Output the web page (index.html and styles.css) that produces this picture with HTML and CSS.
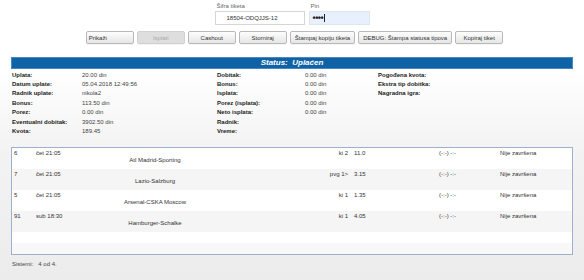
FILE: index.html
```html
<!DOCTYPE html>
<html lang="sr">
<head>
  <meta charset="UTF-8">
  <title>Tiket</title>
  <link rel="stylesheet" href="styles.css">
</head>
<body>
  <div class="page">
    <div class="search">
      <div class="field">
        <label>Šifra tiketa</label>
        <div class="input code">18504-ODQJJS-12</div>
      </div>
      <div class="field">
        <label>Pin</label>
        <div class="input pin"><span class="dots">••••</span><span class="caret"></span></div>
      </div>
    </div>

    <div class="actions">
      <button class="btn left">Prikaži</button>
      <button class="btn" disabled>Isplati</button>
      <button class="btn">Cashout</button>
      <button class="btn">Storniraj</button>
      <button class="btn">Štampaj kopiju tiketa</button>
      <button class="btn">DEBUG: Štampa statusa tipova</button>
      <button class="btn">Kopiraj tiket</button>
    </div>

    <div class="status-bar">Status:&nbsp; Uplaćen</div>

    <div class="info">
      <div class="info-col col-a">
        <b>Uplata:</b><span>20.00 din</span>
        <b>Datum uplate:</b><span>05.04.2018 12:49:56</span>
        <b>Radnik uplate:</b><span>nikola2</span>
        <b>Bonus:</b><span>113.50 din</span>
        <b>Porez:</b><span>0.00 din</span>
        <b>Eventualni dobitak:</b><span>3902.50 din</span>
        <b>Kvota:</b><span>189.45</span>
      </div>
      <div class="info-col col-b">
        <b>Dobitak:</b><span>0.00 din</span>
        <b>Bonus:</b><span>0.00 din</span>
        <b>Isplata:</b><span>0.00 din</span>
        <b>Porez (isplata):</b><span>0.00 din</span>
        <b>Neto isplata:</b><span>0.00 din</span>
        <b>Radnik:</b><span></span>
        <b>Vreme:</b><span></span>
      </div>
      <div class="info-col col-c">
        <b>Pogođena kvota:</b>
        <b>Ekstra tip dobitka:</b>
        <b>Nagradna igra:</b>
      </div>
    </div>

    <div class="pairs">
      <div class="pair">
        <span>6</span><span>čet 21:05</span><span class="match">Atl Madrid-Sporting</span>
        <span class="tip">ki 2</span><span class="odd">11.0</span><span>(-:-) -:-</span><span>Nije završena</span>
      </div>
      <div class="pair">
        <span>7</span><span>čet 21:05</span><span class="match">Lazio-Salzburg</span>
        <span class="tip">pvg 1&gt;</span><span class="odd">3.15</span><span>(-:-) -:-</span><span>Nije završena</span>
      </div>
      <div class="pair">
        <span>5</span><span>čet 21:05</span><span class="match">Arsenal-CSKA Moscow</span>
        <span class="tip">ki 1</span><span class="odd">1.35</span><span>(-:-) -:-</span><span>Nije završena</span>
      </div>
      <div class="pair">
        <span>91</span><span>sub 18:30</span><span class="match">Hamburger-Schalke</span>
        <span class="tip">ki 1</span><span class="odd">4.05</span><span>(-:-) -:-</span><span>Nije završena</span>
      </div>
      <div class="pair empty"></div>
      <div class="pair empty"></div>
    </div>

    <div class="systems"><span>Sistemi:</span><span>4 od 4.</span></div>
  </div>
</body>
</html>
```

FILE: styles.css
```css
* {
  margin: 0;
  padding: 0;
  box-sizing: border-box;
}

body {
  font-family: 'Liberation Sans', Arial, sans-serif;
  font-size: 6px;
  color: #333;
  background: linear-gradient(#fff 0, #fff 70px, #f3f3f3 150px, #ececec 280px);
  height: 280px;
  overflow: hidden;
}

.page {
  padding: 3px 11px 0 11px;
}

.search {
  display: flex;
  justify-content: center;
  gap: 4px;
}

.field label {
  display: block;
  color: #666;
  line-height: 7px;
  height: 8px;
  padding-left: 2px;
}

.input {
  height: 14px;
  border: 1px solid #d6d6d6;
  background: #fff;
  display: flex;
  align-items: center;
  color: #333;
}

.input.code {
  width: 90px;
  padding-left: 11px;
}

.input.pin {
  width: 61px;
  padding-left: 3px;
  background: #e8f0fe;
  border-color: #dfe6f0;
}

.dots {
  font-size: 9px;
  font-weight: bold;
  color: #222;
  letter-spacing: -0.5px;
}

.caret {
  display: inline-block;
  width: 1px;
  height: 8px;
  background: #222;
  margin-left: 1px;
}

.actions {
  display: flex;
  justify-content: center;
  gap: 3px;
  margin-top: 6px;
  padding-left: 5px;
}

.btn {
  font-family: inherit;
  font-size: 6px;
  color: #333;
  min-width: 48px;
  height: 13px;
  padding: 0 4px;
  border: 1px solid #b9b9b9;
  border-radius: 2px;
  background: linear-gradient(#fdfdfd, #e6e6e6);
  box-shadow: 0 1px 0 #f4f4f4;
}

.btn.left {
  text-align: left;
  padding-left: 2px;
}

.btn:disabled {
  background: #dedede;
  color: #aaa;
  border-color: #d0d0d0;
}

.status-bar {
  margin-top: 13px;
  height: 12px;
  background: #0f62a5;
  border: 1px solid #4a86bf;
  color: #fff;
  font-size: 8px;
  font-weight: bold;
  font-style: italic;
  text-align: center;
  line-height: 10px;
  white-space: pre;
}

.info {
  display: flex;
  padding: 1px 0 0 1px;
  height: 78px;
}

.info-col {
  display: grid;
  grid-auto-rows: 9.4px;
  align-items: center;
  align-content: start;
}

.info-col b {
  color: #222;
}

.info-col span {
  color: #444;
}

.col-a {
  width: 205px;
  grid-template-columns: 70px 1fr;
}

.col-b {
  width: 161px;
  grid-template-columns: 88px 1fr;
}

.col-c {
  flex: 1;
  grid-template-columns: 1fr;
}

.pairs {
  border: 1px solid #9fb0cc;
  background: #fff;
}

.pair {
  display: grid;
  grid-template-columns: 22px 51px 136px 125px 91px 61px 1fr;
  height: 21px;
  padding-top: 1px;
  line-height: 8px;
  padding-left: 2px;
}

.pair:nth-child(even) {
  background: #f5f5f5;
}

.pair .match {
  text-align: center;
  align-self: center;
  padding-top: 1px;
}

.pair .tip {
  text-align: right;
}

.pair .odd {
  padding-left: 6px;
}

.pair.empty {
  height: 11px;
}

.pair.empty:nth-child(even) {
  background: #f8f8f8;
}

.systems {
  display: flex;
  gap: 5px;
  padding: 6px 0 0 1px;
  color: #444;
}
```
